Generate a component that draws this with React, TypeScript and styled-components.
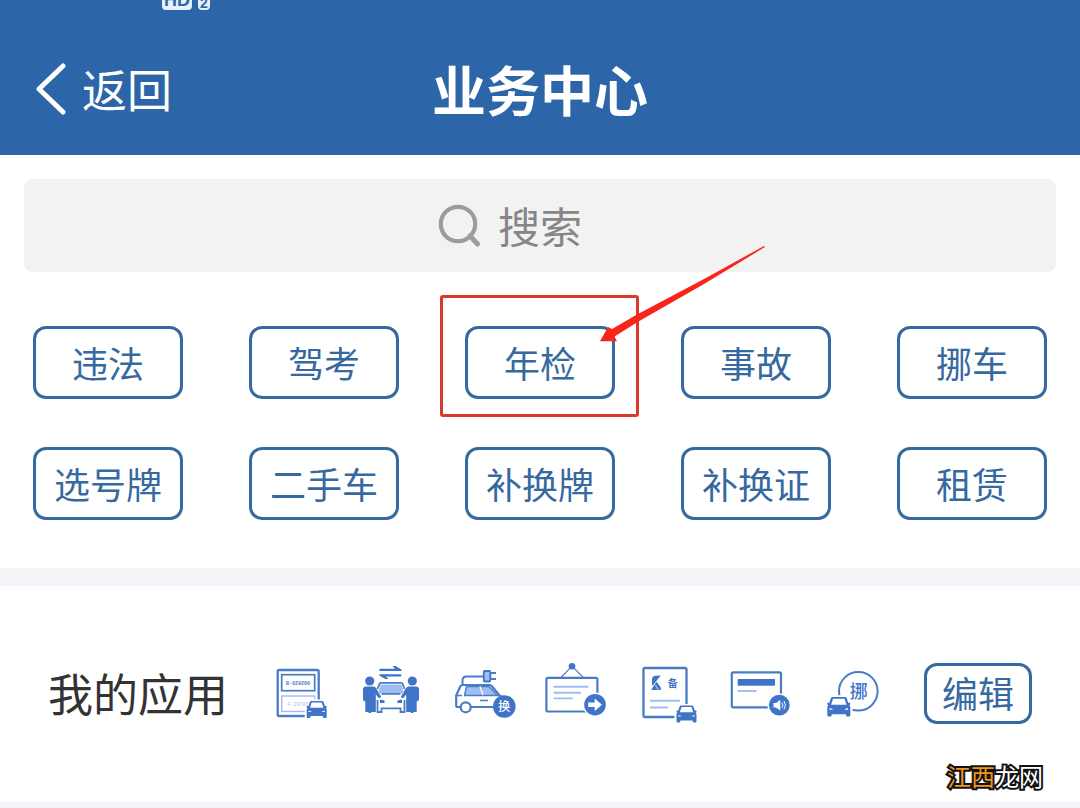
import React from "react";
import styled, { createGlobalStyle } from "styled-components";

const blue = "#2c66a8";
const outline = "#36699f";
const iconBlue = "#3f74c8";
const iconLine = "#4a7cc4";
const paleBlue = "#9fbdf0";

const GlobalStyle = createGlobalStyle`
  *, *::before, *::after { box-sizing: border-box; }
  body {
    margin: 0;
    background: #f4f4f8;
    font-family: "Noto Sans CJK SC", "Noto Sans", sans-serif;
  }
  button, input { font-family: inherit; }
`;

const Page = styled.main`
  width: 100%;
  overflow-x: hidden;
`;

const Header = styled.header`
  background: ${blue};
  color: #fff;
  height: 155px;
`;

const StatusBar = styled.div`
  display: flex;
  align-items: flex-end;
  gap: 6px;
  height: 10px;
  padding-left: 162px;
  overflow: hidden;
`;

const StatusBadge = styled.span<{ $width: number; $size: number; $line: number }>`
  flex: none;
  width: ${(p) => p.$width}px;
  border-radius: 4px;
  background: #e6f1fb;
  color: ${blue};
  font: 700 ${(p) => p.$size}px/${(p) => p.$line}px "Liberation Sans", sans-serif;
  text-align: center;
`;

const NavBar = styled.div`
  display: grid;
  grid-template-columns: 1fr auto 1fr;
  align-items: center;
  height: 145px;
  padding: 12px 36px 0;
`;

const BackButton = styled.button`
  display: flex;
  align-items: center;
  justify-self: start;
  gap: 16px;
  padding: 0;
  border: 0;
  background: none;
  color: inherit;
  font-size: 45px;
  line-height: 64px;
`;

const Title = styled.h1`
  margin: 0;
  font-size: 54px;
  line-height: 70px;
  font-weight: 700;
`;

const Panel = styled.section`
  background: #fff;
  padding-bottom: 48px;
`;

const SearchWrap = styled.div`
  padding: 24px 24px 54px;
`;

const SearchBox = styled.label`
  display: flex;
  align-items: center;
  justify-content: center;
  gap: 16px;
  height: 93px;
  padding-bottom: 2px;
  border-radius: 9px;
  background: #f2f2f2;
`;

const SearchInput = styled.input`
  width: 144px;
  height: 72px;
  padding: 0;
  border: 0;
  outline: 0;
  background: none;
  color: #444;
  font-size: 42px;
  &::placeholder { color: #868686; opacity: 1; }
`;

const ServiceGrid = styled.div`
  display: grid;
  grid-template-columns: repeat(5, 1fr);
  row-gap: 48px;
  justify-items: center;
`;

const ServiceCell = styled.div`
  position: relative;
`;

const OutlineButton = styled.button<{ $width: number; $height: number }>`
  display: flex;
  align-items: center;
  justify-content: center;
  width: ${(p) => p.$width}px;
  height: ${(p) => p.$height}px;
  padding: 0 0 2px;
  border: 3px solid ${outline};
  border-radius: 13px;
  background: #fff;
  color: ${outline};
  font-size: 36px;
  line-height: 52px;
`;

const Highlight = styled.div`
  position: absolute;
  inset: -31px -24px -18px -25px;
  border: 3px solid #d93a2c;
  border-radius: 3px;
  pointer-events: none;
`;

const Pointer = styled.svg`
  position: absolute;
  left: 135px;
  top: -81px;
  pointer-events: none;
`;

const AppsPanel = styled.section`
  position: relative;
  display: flex;
  align-items: center;
  justify-content: space-between;
  height: 216px;
  margin-top: 18px;
  padding: 0 48px 2px;
  background: #fff;
`;

const AppsTitle = styled.h2`
  margin: 0;
  color: #333;
  font-size: 45px;
  line-height: 64px;
  font-weight: 400;
`;

const IconRow = styled.div`
  display: flex;
  gap: 28px;
  padding-top: 2px;
`;

const Watermark = styled.div`
  position: absolute;
  right: 37px;
  bottom: 8px;
  color: #fff;
  font-size: 24px;
  line-height: 36px;
  -webkit-text-stroke: 4px #111;
  paint-order: stroke fill;
`;

const WatermarkAccent = styled.span`
  color: #ee941f;
`;

const AppIcon = ({ label, children }: { label: string; children: React.ReactNode }) => (
  <svg width="64" height="64" viewBox="0 0 64 64" fill="none" role="img" aria-label={label}>
    {children}
  </svg>
);

/* Front view of a car, drawn on a 20 x 17 field. */
const Car = ({ x, y, scale = 1 }: { x: number; y: number; scale?: number }) => (
  <g transform={`translate(${x} ${y}) scale(${scale})`}>
    <path d="M3 -1.5H17L19 5L22 8V19H-2V8L1 5Z" fill="#fff" />
    <path
      fillRule="evenodd"
      fill={iconBlue}
      d="M4.6 0H15.4Q16.6 0 17 1.2L18.2 5H19.4Q20 5 20 5.7V6.6Q20 7 19.2 7.1Q20 8 20 9V15.8Q20 17 18.9 17H17.3Q16.2 17 16.2 15.8V15H3.8V15.8Q3.8 17 2.7 17H1.1Q0 17 0 15.8V9Q0 8 .8 7.1Q0 7 0 6.6V5.7Q0 5 .6 5H1.8L3 1.2Q3.4 0 4.6 0ZM5 1.5L3.3 6.8H16.7L15 1.5ZM2 9.6V11H4.6V10.4ZM18 9.6L15.4 10.4V11H18Z"
    />
  </g>
);

const PlateIcon = () => (
  <AppIcon label="号牌">
    <rect x="9.7" y="8" width="41" height="46" rx="1.5" stroke={iconLine} strokeWidth="2.3" />
    <rect x="13.7" y="12.7" width="33" height="16" stroke={iconLine} strokeWidth="1.7" />
    <rect x="13.7" y="34" width="33" height="15.5" stroke={paleBlue} strokeWidth="1.4" />
    <text x="30" y="22.8" textAnchor="middle" fontSize="5" fontWeight="700" fontFamily="Liberation Mono, monospace" fill={iconLine}>B·929266</text>
    <text x="30" y="43.5" textAnchor="middle" fontSize="5" fontFamily="Liberation Mono, monospace" fill={paleBlue}>F·29726</text>
    <Car x={38.7} y={39} />
  </AppIcon>
);

const TransferIcon = () => (
  <AppIcon label="过户">
    <g fill={iconBlue}>
      <path d="M19.5 6.8H35L32.5 4H35.5L41.5 7.5V9H19.5Z" />
      <path d="M41.2 14.4H26L28.5 17H25.5L19.5 13.7V12.2H41.2Z" />
      <circle cx="9.7" cy="19" r="4.6" />
      <circle cx="52.3" cy="19" r="4.6" />
      <path d="M6 24.5H13.5Q15 24.5 16 26L21 34.5Q20.5 36.5 18.7 36L15.8 32.5V50H11.2V51H8.5V50H5.3V39.5Q3 39 3 37V27.5Q3 24.5 6 24.5Z" />
      <path d="M56 24.5H48.5Q47 24.5 46 26L41 34.5Q41.5 36.5 43.3 36L46.2 32.5V50H50.8V51H53.5V50H56.7V39.5Q59 39 59 37V27.5Q59 24.5 56 24.5Z" />
    </g>
    <path d="M20.5 22.5H41.5L44 31.5H18Z" fill={paleBlue} />
    <path d="M17.5 27L19.5 21.6Q20 20.8 21 20.8H41Q42 20.8 42.5 21.6L44.5 27M21.5 31.8H40.5M17.5 38V50H21.5V46.3H40.5V50H44.5V38" stroke={iconLine} strokeWidth="1.8" />
    <path d="M20 37.5L24.5 38.5V41H20ZM42 37.5L37.5 38.5V41H42Z" fill={iconBlue} />
  </AppIcon>
);

const ElectricCarIcon = () => (
  <AppIcon label="新能源换牌">
    <path d="M10.5 22V18.5Q10.5 14.5 14.5 14.5H31M39 11H44M39 17H44" stroke={iconLine} strokeWidth="2" />
    <rect x="31.8" y="9" width="6.5" height="10.5" rx="1" fill={paleBlue} stroke={iconBlue} strokeWidth="1.8" />
    <path d="M8.5 45H5.5Q4.2 45 4.2 43.5V33.5L8.5 24Q9 23 10.5 23H37.5Q39 23 40 24.2L47.5 33.5L52 36M19 45H42" stroke={iconLine} strokeWidth="2.2" />
    <path d="M14.5 24.5H37L45.5 33.5H12.5Z" fill={paleBlue} stroke={iconLine} strokeWidth="1.4" />
    <path d="M28 24.5L31 33" stroke="#fff" strokeWidth="1.3" />
    <path d="M5 33.5H10M28 38.5H36" stroke={iconLine} strokeWidth="1.6" />
    <circle cx="13.7" cy="45.3" r="5" fill="#fff" stroke={iconLine} strokeWidth="2.2" />
    <circle cx="52.3" cy="44.5" r="11.3" fill={iconBlue} />
    <text x="52.3" y="49" textAnchor="middle" fontSize="12" fontWeight="500" fill="#fff">换</text>
  </AppIcon>
);

const BoardIcon = () => (
  <AppIcon label="业务转出">
    <path d="M17 15.5L28 4L39.3 15.5" stroke={iconLine} strokeWidth="1.1" />
    <circle cx="28" cy="4.2" r="3.3" fill={iconBlue} />
    <rect x="2.4" y="15.8" width="51" height="33.7" rx="1.5" stroke={iconLine} strokeWidth="2.2" />
    <path d="M9.5 24.8H44.3M9.5 30.7H37M9.5 36.4H28.7" stroke={paleBlue} strokeWidth="1.9" />
    <circle cx="51" cy="42.7" r="12.2" fill="#fff" />
    <circle cx="51" cy="42.7" r="10.8" fill={iconBlue} />
    <path d="M44.2 40.5H50.7V36.5L58 42.7L50.7 48.9V44.9H44.2Z" fill="#fff" />
  </AppIcon>
);

const RecordIcon = () => (
  <AppIcon label="备案">
    <rect x="7.5" y="6" width="43" height="49" rx="1.5" stroke={iconLine} strokeWidth="2.3" />
    <path d="M16 17.5Q16.2 13.6 20 13.8L24.8 13.4L16.4 24Q15.6 21 16 17.5Z" fill={iconBlue} />
    <path d="M15 28L20.6 19.8L24.8 25.6V28Z" fill={iconBlue} />
    <path d="M19.4 23L22.4 28" stroke="#fff" strokeWidth="0.7" />
    <text x="36.8" y="25" textAnchor="middle" fontSize="10" fontWeight="700" fill={iconBlue}>备</text>
    <path d="M14 38.7H44M14 45.5H32" stroke={paleBlue} strokeWidth="2" />
    <Car x={40.5} y={43.5} />
  </AppIcon>
);

const BroadcastIcon = () => (
  <AppIcon label="语音播报">
    <rect x="3.8" y="10.3" width="49.2" height="35" rx="1.5" stroke={iconLine} strokeWidth="2.2" />
    <rect x="9.7" y="17" width="37.3" height="6.7" fill={iconBlue} />
    <path d="M9.7 29H28.5" stroke={paleBlue} strokeWidth="1.9" />
    <circle cx="51.3" cy="43.2" r="11.8" fill="#fff" />
    <circle cx="51.3" cy="43.2" r="10.4" fill={iconBlue} />
    <path d="M45.5 41H48L52.3 38V48.4L48 45.4H45.5Z" fill="#fff" />
    <path d="M54 40.7Q55.8 43.2 54 45.7M56 39Q58.9 43.2 56 47.4" stroke="#fff" strokeWidth="1" />
  </AppIcon>
);

const MoveCarIcon = () => (
  <AppIcon label="挪车">
    <circle cx="38.3" cy="29.3" r="19.3" stroke={iconLine} strokeWidth="2" />
    <text x="38.8" y="36" textAnchor="middle" fontSize="18" fontWeight="500" fill={iconBlue}>挪</text>
    <Car x={7.3} y={35} scale={1.15} />
  </AppIcon>
);

const services = ["违法", "驾考", "年检", "事故", "挪车", "选号牌", "二手车", "补换牌", "补换证", "租赁"];

export default function App() {
  return (
    <Page>
      <GlobalStyle />
      <Header>
        <StatusBar>
          <StatusBadge $width={30} $size={18} $line={20}>HD</StatusBadge>
          <StatusBadge $width={12} $size={14} $line={14}>2</StatusBadge>
        </StatusBar>
        <NavBar>
          <BackButton type="button">
            <svg width="30" height="52" viewBox="0 0 30 52" fill="none" aria-hidden="true">
              <path d="M27 3L3 26L27 49" stroke="#fff" strokeWidth="5" strokeLinecap="round" strokeLinejoin="round" />
            </svg>
            返回
          </BackButton>
          <Title>业务中心</Title>
        </NavBar>
      </Header>
      <Panel>
        <SearchWrap>
          <SearchBox>
            <svg width="44" height="44" viewBox="0 0 44 44" fill="none" aria-hidden="true">
              <circle cx="20" cy="21" r="17.2" stroke="#9c9c9c" strokeWidth="4.2" />
              <path d="M32 33L39.5 41" stroke="#9c9c9c" strokeWidth="5" strokeLinecap="round" />
            </svg>
            <SearchInput type="text" placeholder="搜索" aria-label="搜索" />
          </SearchBox>
        </SearchWrap>
        <ServiceGrid>
          {services.map((name) => (
            <ServiceCell key={name}>
              <OutlineButton type="button" $width={150} $height={73}>{name}</OutlineButton>
              {name === "年检" && (
                <>
                  <Highlight />
                  <Pointer width="168" height="100" viewBox="0 0 168 100" aria-hidden="true">
                    <path d="M164 1L165 2L104 39L38.5 76.5L14.5 91.5L17 96.3L0 96.3L8 82L12 84L37 69.5L104 34Z" fill="#f8261a" />
                  </Pointer>
                </>
              )}
            </ServiceCell>
          ))}
        </ServiceGrid>
      </Panel>
      <AppsPanel>
        <AppsTitle>我的应用</AppsTitle>
        <IconRow>
          <PlateIcon />
          <TransferIcon />
          <ElectricCarIcon />
          <BoardIcon />
          <RecordIcon />
          <BroadcastIcon />
          <MoveCarIcon />
        </IconRow>
        <OutlineButton type="button" $width={108} $height={61}>编辑</OutlineButton>
        <Watermark>
          <WatermarkAccent>江西</WatermarkAccent>龙网
        </Watermark>
      </AppsPanel>
    </Page>
  );
}
